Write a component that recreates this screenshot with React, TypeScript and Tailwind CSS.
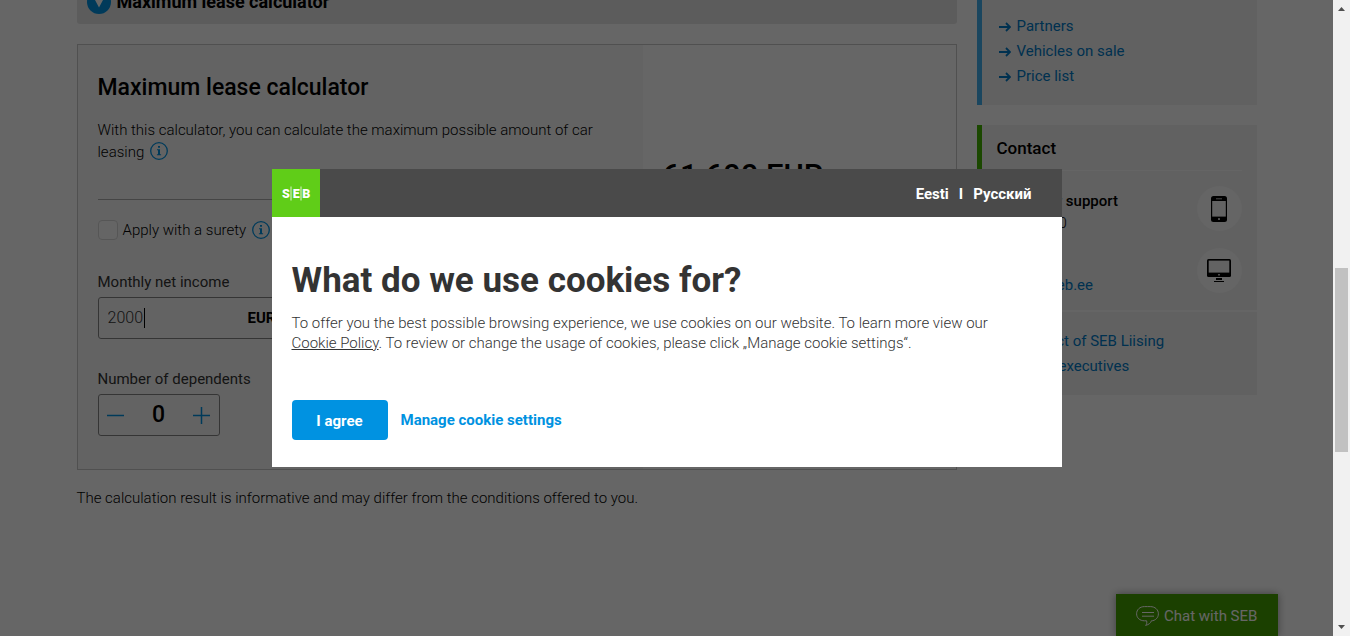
import type { ReactNode } from "react";

function InfoIcon() {
  return (
    <svg viewBox="0 0 18 18" className="block size-[18px] shrink-0" fill="none" aria-hidden="true">
      <circle cx="9" cy="9" r="8.3" stroke="#0092e1" strokeWidth="1.3" />
      <path d="M8 4h2v1.8H8zM7 7.2h3v5h1.1v1H6.9v-1H8v-4H7z" fill="#0092e1" />
    </svg>
  );
}

function ArrowLink({ children }: { children: ReactNode }) {
  return (
    <li className="flex items-center gap-1.5">
      <svg viewBox="0 0 12 10" className="ml-0.5 h-2.5 w-3" fill="none" stroke="currentColor" strokeWidth="1.8" aria-hidden="true">
        <path d="M0 5h11M7 1l4 4-4 4" />
      </svg>
      <a href="#">{children}</a>
    </li>
  );
}

function RoundIcon({ children }: { children: ReactNode }) {
  return <span className="flex size-[45px] items-center justify-center rounded-full bg-[#fcfcfc]">{children}</span>;
}

function PhoneIcon() {
  return (
    <svg viewBox="0 0 16 26" className="h-[26px] w-4" aria-hidden="true">
      <rect width="16" height="26" rx="2.5" fill="#000" />
      <rect x="1.2" y="5" width="13.6" height="15.6" fill="#f8f8f8" />
      <rect x="5" y="2.3" width="6" height="1" fill="#bbb" />
      <rect x="7" y="22" width="2" height="2" rx="0.5" fill="#ccc" />
    </svg>
  );
}

function MonitorIcon() {
  return (
    <svg viewBox="0 0 24 24" className="size-6" aria-hidden="true">
      <rect width="24" height="18" rx="1.5" fill="#000" />
      <rect x="1.7" y="1.6" width="20.6" height="12" fill="#f8f8f8" />
      <rect x="11" y="15" width="2" height="1.6" rx="0.5" fill="#ccc" />
      <path d="M9 19h6v2H9zM7 22h10v1H7z" fill="#000" />
    </svg>
  );
}

function Calculator() {
  return (
    <section className="flex border border-[#c8c8c8]">
      <div className="w-[565px] bg-[#f8f8f8] px-5 pt-[29px] pb-[33px]">
        <h2 className="text-[23px] leading-7 font-medium">Maximum lease calculator</h2>
        <p className="mt-[17px] text-[15px] leading-[22px] font-light">
          With this calculator, you can calculate the maximum possible amount of car leasing{" "}
          <button type="button" aria-label="More information" className="-mt-1 ml-0.5 h-[18px] align-middle">
            <InfoIcon />
          </button>
        </p>
        <hr className="mt-9 border-[#adadad]" />
        <div className="mt-5 flex h-5 items-center">
          <input
            id="surety"
            type="checkbox"
            className="size-5 appearance-none rounded-sm border border-[#d8d8d8] bg-[#fcfcfc]"
          />
          <label htmlFor="surety" className="ml-[5px] text-[15px] font-light">
            Apply with a surety
          </label>
          <button type="button" aria-label="About surety" className="ml-1.5 h-[18px]">
            <InfoIcon />
          </button>
        </div>
        <label htmlFor="income" className="mt-8 block text-[15px] leading-5 text-[#333]">
          Monthly net income
        </label>
        <div className="mt-[5px] flex h-[42px] w-[190px] items-center rounded-[3px] border border-[#868686] px-[9px]">
          <span className="relative flex min-w-0 flex-1 items-center">
            <input
              id="income"
              defaultValue="2000"
              className="w-full bg-transparent text-base font-light text-[#333] outline-none"
            />
            <span className="absolute left-9 h-5 w-px bg-black" />
          </span>
          <span className="w-[30px] text-[15px] font-bold">EUR</span>
        </div>
        <p className="mt-[30px] text-[15px] leading-5 text-[#333]">Number of dependents</p>
        <div className="mt-[5px] flex h-[42px] w-[122px] items-center justify-between rounded-[3px] border border-[#868686] px-2">
          <button type="button" aria-label="Decrease" className="size-[17px]">
            <svg viewBox="0 0 17 17" stroke="#0092e1" strokeWidth="1.5" aria-hidden="true">
              <path d="M0 8.5h17" />
            </svg>
          </button>
          <output className="text-[23px] leading-7 font-medium">0</output>
          <button type="button" aria-label="Increase" className="size-[17px]">
            <svg viewBox="0 0 17 17" stroke="#0092e1" strokeWidth="1.5" aria-hidden="true">
              <path d="M0 8.5h17M8.5 0v17" />
            </svg>
          </button>
        </div>
      </div>
      <div className="flex-1 px-5 pt-[113px]">
        <p className="text-[31px] leading-9 font-medium">61 600 EUR</p>
      </div>
    </section>
  );
}

function Sidebar() {
  return (
    <aside className="flex w-[280px] shrink-0 flex-col gap-5">
      <nav className="border-l-[5px] border-[#41b0ee] bg-[#f2f2f2] pt-[34px] pb-4 pl-[15px]">
        <ul className="text-[15px] leading-[25px] text-[#007ac7]">
          <ArrowLink>Partners</ArrowLink>
          <ArrowLink>Vehicles on sale</ArrowLink>
          <ArrowLink>Price list</ArrowLink>
        </ul>
      </nav>
      <section className="border-l-[5px] border-[#45b400] bg-[#f2f2f2]">
        <div className="pr-[15px] pl-[15px]">
          <h2 className="border-b border-[#fcfcfc] pt-[11px] pb-2.5 text-[17px] leading-6 font-medium">Contact</h2>
          <div className="flex h-[62px] items-start justify-between pt-[15px]">
            <div className="pt-1 text-[15px] leading-[22px]">
              <p className="font-medium">Customer support</p>
              <p className="font-light">665 71000</p>
            </div>
            <RoundIcon>
              <PhoneIcon />
            </RoundIcon>
          </div>
          <div className="flex h-[77px] items-start justify-between pt-[15px]">
            <div className="pt-1 text-[15px] leading-[22px]">
              <p className="font-medium">E-mail</p>
              <a href="#" className="text-[#007ac7]">
                liising@seb.ee
              </a>
            </div>
            <RoundIcon>
              <MonitorIcon />
            </RoundIcon>
          </div>
        </div>
        <ul className="border-t-2 border-[#fcfcfc] pt-[17px] pb-4 pl-[15px] text-[15px] leading-[25px] text-[#007ac7]">
          <ArrowLink>Contact of SEB Liising</ArrowLink>
          <ArrowLink>Client executives</ArrowLink>
        </ul>
      </section>
    </aside>
  );
}

function CookieDialog() {
  return (
    <div role="dialog" aria-modal="true" aria-labelledby="cookie-title" className="w-[790px] bg-white">
      <header className="flex h-12 items-center justify-between bg-[#4a4a4a] pr-[30px]">
        <svg viewBox="0 0 48 48" className="size-12" role="img" aria-label="SEB">
          <rect width="48" height="48" fill="#60cd18" />
          <g fill="#fff" fontFamily="Roboto, sans-serif" fontWeight="900" fontSize="12.5" textAnchor="middle">
            <text x="13.8" y="28.5">S</text>
            <text x="24.2" y="28.5">E</text>
            <text x="34.3" y="28.5">B</text>
          </g>
          <path d="M19 17.5v14M29 17.5v14" stroke="#fff" strokeWidth="0.8" />
        </svg>
        <nav className="flex items-center gap-[10px] pt-0.5 text-[15px] font-bold text-white">
          <a href="#">Eesti</a>
          <span>I</span>
          <a href="#">Русский</a>
        </nav>
      </header>
      <div className="px-5 pt-[43px] pb-[27px] text-[#333]">
        <h1 id="cookie-title" className="text-[35px] leading-[42px] font-bold">
          What do we use cookies for?
        </h1>
        <p className="mt-[11px] pr-5 text-[15px] leading-5 font-light">
          To offer you the best possible browsing experience, we use cookies on our website. To learn more view our{" "}
          <a href="#" className="underline">
            Cookie Policy
          </a>
          . To review or change the usage of cookies, please click „Manage cookie settings“.
        </p>
        <div className="mt-[47px] flex items-center gap-[13px] text-[15px] font-bold">
          <button type="button" className="h-10 w-24 rounded-[4px] bg-[#0092e1] pt-0.5 text-white">
            I agree
          </button>
          <button type="button" className="text-[#0092e1]">
            Manage cookie settings
          </button>
        </div>
      </div>
    </div>
  );
}

function ChatButton() {
  return (
    <button
      type="button"
      className="absolute right-[55px] bottom-0 flex h-[42px] w-[162px] items-center gap-[5px] bg-[#45a000] pt-0.5 pl-5 text-[15px] text-white shadow-[0_0_8px_rgba(0,0,0,0.4)]"
    >
      <svg viewBox="0 0 23 20" className="h-5 w-[23px]" fill="none" stroke="currentColor" aria-hidden="true">
        <path d="M11.5.6h2.8c4.900 0 8.100 3.200 8.100 7.200s-3.200 7-7 7c-.6 2.200-2.600 3.800-5.800 4.600 1.300-1.400 1.500-2.900 1-4.600H8.500C3.700 14.800.6 11.800.6 7.800S3.700.6 8.500.6h3z" />
        <path d="M6 6.500h12M6 10.200h12" />
      </svg>
      Chat with SEB
    </button>
  );
}

function Scrollbar() {
  return (
    <div aria-hidden="true" className="flex w-[17px] shrink-0 flex-col items-center bg-[#f1f1f1]">
      <svg viewBox="0 0 17 17" className="size-[17px]" fill="#505050">
        <path d="M5 11h7L8.500 7z" />
      </svg>
      <div className="w-full flex-1 px-0.5 pt-[251px]">
        <div className="h-[184px] bg-[#c1c1c1]" />
      </div>
      <svg viewBox="0 0 17 17" className="size-[17px]" fill="#505050">
        <path d="M5 6h7l-3.500 4z" />
      </svg>
    </div>
  );
}

export default function App() {
  return (
    <div className="flex h-screen bg-white font-['Roboto',sans-serif] text-black">
      <div className="relative min-w-0 flex-1 overflow-hidden">
        <main className="mx-auto flex max-w-[1180px] gap-5">
          <div className="min-w-0 flex-1">
            <div className="flex h-6 items-end">
              <button
                type="button"
                className="flex h-11 w-full items-center gap-[6px] rounded-[3px] bg-[#e6e6e6] pl-2.5 text-left text-lg font-bold"
              >
                <svg viewBox="0 0 24 24" className="size-6" aria-hidden="true">
                  <circle cx="12" cy="12" r="12" fill="#0092e1" />
                  <path d="M7.500 9h9L12 17.500z" fill="#fff" />
                </svg>
                Maximum lease calculator
              </button>
            </div>
            <div className="mt-5">
              <Calculator />
            </div>
            <p className="mt-[17px] text-[15px] leading-[22px] font-light">
              The calculation result is informative and may differ from the conditions offered to you.
            </p>
          </div>
          <div className="-mt-5">
            <Sidebar />
          </div>
        </main>
        <ChatButton />
        <div className="absolute inset-0 flex items-center justify-center bg-black/60">
          <CookieDialog />
        </div>
      </div>
      <Scrollbar />
    </div>
  );
}
